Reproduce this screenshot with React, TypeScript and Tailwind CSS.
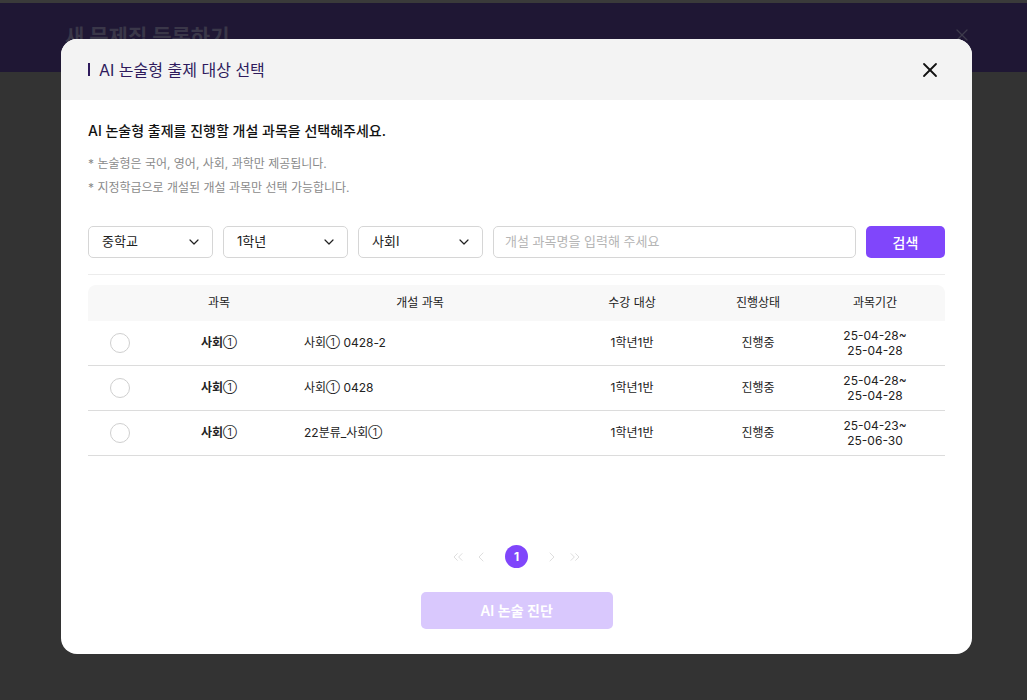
import { ChevronDown, X, ChevronLeft, ChevronRight, ChevronsLeft, ChevronsRight } from 'lucide-react'

const rows = [
    { subject: '사회', course: '사회', suffix: ' 0428-2', target: '1학년1반', status: '진행중', from: '25-04-28~', to: '25-04-28' },
    { subject: '사회', course: '사회', suffix: ' 0428', target: '1학년1반', status: '진행중', from: '25-04-28~', to: '25-04-28' },
    { subject: '사회', course: '22분류_사회', suffix: '', target: '1학년1반', status: '진행중', from: '25-04-23~', to: '25-06-30' },
]

const selects = ['중학교', '1학년', '사회I']

const grid = 'grid grid-cols-[64px_134px_268px_156px_96px_138px]'

function One() {
    return <span className="align-[1px] text-[10px] font-normal">①</span>
}

export default function App() {
    return (
        <div
            className="relative h-[700px] w-full overflow-hidden bg-[#333333]"
            style={{ fontFamily: 'Inter, "Noto Sans CJK KR", sans-serif' }}
        >
            {/* page behind overlay */}
            <div className="h-[3px] bg-[#3a3a3a]" />
            <div className="flex h-[69px] items-start justify-between bg-[#1f1734] px-[65px] pt-[18px]">
                <span className="text-[21px] font-bold text-[#3a3749]">새 문제집 등록하기</span>
                <X className="mr-[-10px] mt-[4px] h-5 w-5 text-[#3e3b4c]" strokeWidth={1.5} />
            </div>

            {/* modal */}
            <div className="absolute left-[61px] top-[39px] flex h-[615px] w-[911px] flex-col overflow-hidden rounded-[16px] bg-white">
                <div className="flex h-[61px] shrink-0 items-center justify-between bg-[#f3f3f3] pl-[27px] pr-[30px]">
                    <div className="flex items-center gap-[9px]">
                        <span className="h-[13px] w-[2px] bg-[#2e1a5c]" />
                        <span className="text-[16px] font-normal text-[#2e1a5c]">AI 논술형 출제 대상 선택</span>
                    </div>
                    <X className="h-6 w-6 text-[#111]" strokeWidth={1.8} />
                </div>

                <div className="flex flex-1 flex-col px-[27px]">
                    <p className="mt-[20px] text-[14px] font-medium text-[#111]">AI 논술형 출제를 진행할 개설 과목을 선택해주세요.</p>
                    <p className="mt-[14px] text-[12px] text-[#8a8a8a]">* 논술형은 국어, 영어, 사회, 과학만 제공됩니다.</p>
                    <p className="mt-[6px] text-[12px] text-[#8a8a8a]">* 지정학급으로 개설된 개설 과목만 선택 가능합니다.</p>

                    <div className="mt-[29px] flex h-[32px] items-stretch gap-[10px]">
                        {selects.map((s) => (
                            <div
                                key={s}
                                className="flex w-[125px] items-center justify-between rounded-[5px] border border-[#d6d6d6] pl-[13px] pr-[10px] text-[13px] text-[#222]"
                            >
                                <span>{s}</span>
                                <ChevronDown className="h-4 w-4 text-[#222]" strokeWidth={1.8} />
                            </div>
                        ))}
                        <div className="flex flex-1 items-center rounded-[5px] border border-[#d6d6d6] px-[11px] text-[13px] text-[#b5b5b5]">
                            개설 과목명을 입력해 주세요
                        </div>
                        <button className="w-[79px] rounded-[5px] bg-[#8046fb] text-[14px] font-medium text-white">검색</button>
                    </div>

                    <div className="mt-[16px] h-px bg-[#ececec]" />

                    <div className="mt-[10px]">
                        <div className={`${grid} h-[36px] items-center rounded-t-[8px] bg-[#f8f8f8] text-center text-[12px] text-[#222]`}>
                            <span />
                            <span>과목</span>
                            <span>개설 과목</span>
                            <span>수강 대상</span>
                            <span>진행상태</span>
                            <span>과목기간</span>
                        </div>
                        {rows.map((r, i) => (
                            <div
                                key={i}
                                className={`${grid} h-[45px] items-center border-b border-[#dcdcdc] text-center text-[12px] text-[#222]`}
                            >
                                <span className="flex justify-center">
                                    <span className="h-[20px] w-[20px] rounded-full border border-[#cfcfcf]" />
                                </span>
                                <span className="font-semibold">
                                    {r.subject}
                                    <One />
                                </span>
                                <span className="pl-[18px] text-left">
                                    {r.course}
                                    <One />
                                    {r.suffix}
                                </span>
                                <span>{r.target}</span>
                                <span>{r.status}</span>
                                <span className="leading-[15px]">
                                    {r.from}
                                    <br />
                                    {r.to}
                                </span>
                            </div>
                        ))}
                    </div>

                    <div className="mt-auto flex flex-col items-center pb-[25px]">
                        <div className="flex items-center gap-[7px] text-[#dedede]">
                            <ChevronsLeft className="h-4 w-4" strokeWidth={1.5} />
                            <ChevronLeft className="h-4 w-4" strokeWidth={1.5} />
                            <span className="mx-[9px] flex h-[23px] w-[23px] items-center justify-center rounded-full bg-[#8046fb] text-[12px] font-bold text-white">1</span>
                            <ChevronRight className="h-4 w-4" strokeWidth={1.5} />
                            <ChevronsRight className="h-4 w-4" strokeWidth={1.5} />
                        </div>
                        <button className="mt-[24px] h-[37px] w-[192px] rounded-[5px] bg-[#d9c8fd] text-[14px] font-semibold text-white">
                            AI 논술 진단
                        </button>
                    </div>
                </div>
            </div>
        </div>
    )
}
